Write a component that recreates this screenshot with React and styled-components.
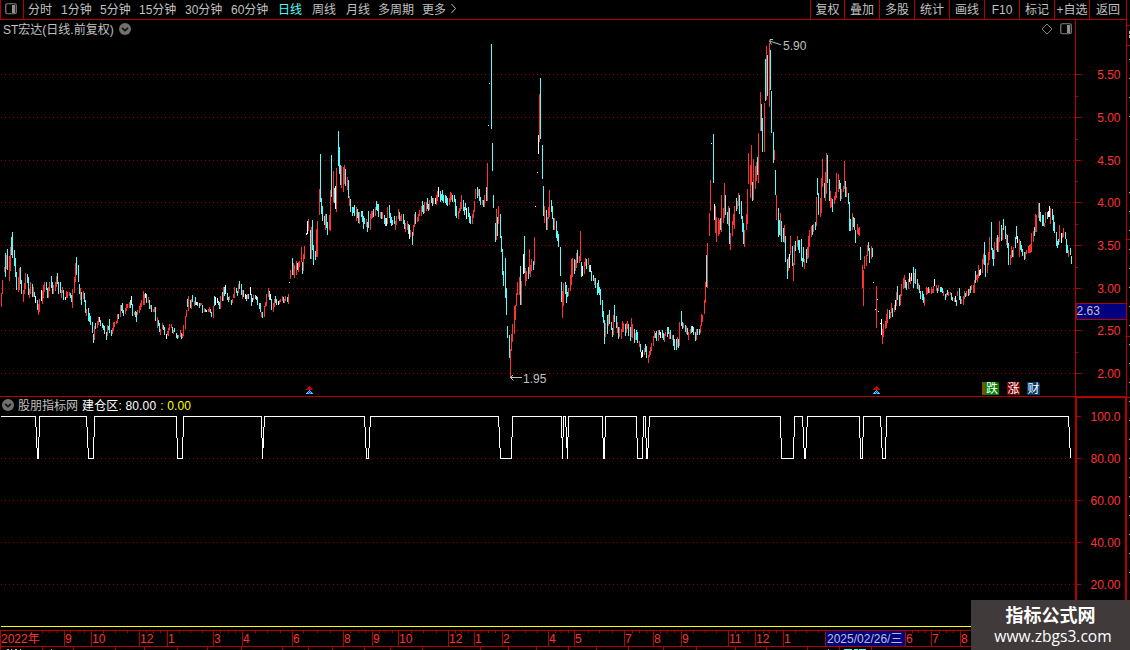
import React from 'react';

import styled, { createGlobalStyle } from 'styled-components';

const RED = '#b40000';
const UI_FONT = '"Liberation Sans", "Noto Sans CJK SC", sans-serif';

const GlobalStyle = createGlobalStyle`
  body {
    margin: 0;
    background: #000;
    overflow: hidden;
  }
`;

const Screen = styled.div`
  position: relative;
  display: grid;
  grid-template-columns: 1127px 3px;
  width: 1130px;
  height: 650px;
  overflow: hidden;
  background: #000;
  color: #c0c0c0;
  font-family: ${UI_FONT};
  font-size: 12px;
`;

const Main = styled.div`
  display: flex;
  flex-direction: column;
  height: 650px;
`;

const Toolbar = styled.div`
  display: flex;
  justify-content: space-between;
  box-sizing: border-box;
  height: 20px;
  border-bottom: 1px solid ${RED};
  border-left: 1px solid ${RED};
  border-right: 1px solid ${RED};
  line-height: 20px;
  white-space: nowrap;
`;

const ToolbarGroup = styled.div`
  display: flex;
  height: 19px;
`;

const LayoutToggle = styled.div`
  box-sizing: border-box;
  width: 23px;
  height: 19px;
  padding: 3px 0 0 4px;
  margin-right: 4px;
  border-right: 1px solid ${RED};
  line-height: 0;
`;

const Period = styled.span`
  width: ${(p) => p.$width}px;
  color: ${(p) => (p.$active ? '#54fcfc' : '#c0c0c0')};
`;

const Action = styled.span`
  box-sizing: border-box;
  width: ${(p) => p.$width}px;
  border-left: 1px solid ${RED};
  text-align: center;
`;

const Panel = styled.div`
  position: relative;
  height: ${(p) => p.$height}px;
`;

const PanelTitle = styled.div`
  position: absolute;
  top: ${(p) => p.$top}px;
  left: ${(p) => p.$left}px;
  display: flex;
  align-items: center;
  gap: ${(p) => p.$gap}px;
  height: 14px;
  line-height: 14px;
  white-space: nowrap;
`;

const TitleText = styled.span`
  padding-top: 2px;
  color: ${(p) => p.$color || '#c0c0c0'};
  letter-spacing: ${(p) => (p.$color ? 0.15 : 0)}px;
`;

const PanelTools = styled.div`
  position: absolute;
  top: 3px;
  right: 55px;
  display: flex;
  gap: 7px;
`;

const Tags = styled.div`
  position: absolute;
  top: 362px;
  left: 982px;
  display: flex;
  gap: 7px;
`;

const Tag = styled.span`
  box-sizing: border-box;
  width: ${(p) => (p.$edge ? 17 : 13)}px;
  height: 13px;
  margin-right: ${(p) => (p.$edge ? 1 : 0)}px;
  border-left: ${(p) => (p.$edge ? `3px solid ${p.$edge}` : 'none')};
  border-radius: 0 2px 0 0;
  background: ${(p) => p.$bg};
  color: #fff;
  line-height: 14px;
  text-align: center;
`;

const TimeAxis = styled.div`
  position: relative;
  display: flex;
  box-sizing: border-box;
  height: 17px;
  border-top: 1px solid ${RED};
  border-bottom: 1px solid ${RED};
  line-height: 17px;
`;

const TimeCell = styled.span`
  box-sizing: border-box;
  width: ${(p) => p.$width}px;
  height: 15px;
  padding-left: ${(p) => (p.$current ? 1 : 0)}px;
  border-left: 1px solid ${RED};
  background: ${(p) => (p.$current ? '#000080' : 'transparent')};
  color: ${(p) => (p.$current ? '#c0c0c0' : '#ff3232')};
  white-space: nowrap;
`;

const Overlay = styled.svg`
  position: absolute;
  top: -1px;
  left: 0;
`;

const Watermark = styled.div`
  position: absolute;
  right: 0;
  bottom: 0;
  display: flex;
  flex-direction: column;
  align-items: center;
  box-sizing: border-box;
  width: 159px;
  height: 50px;
  padding-top: 6px;
  background: #403a3a;
  color: #fff;
`;

const SiteName = styled.div`
  font: bold 18px/21px ${UI_FONT};
`;

const SiteUrl = styled.div`
  padding-left: 5px;
  font: 15.6px/18px 'Open Sans', sans-serif;
`;

const PERIODS = [
  ['分时', 33],
  ['1分钟', 39],
  ['5分钟', 39],
  ['15分钟', 46],
  ['30分钟', 46],
  ['60分钟', 47],
  ['日线', 34],
  ['周线', 34],
  ['月线', 32],
  ['多周期', 44],
  ['更多', 28],
];

const ACTIONS = [
  ['复权', 34],
  ['叠加', 35],
  ['多股', 35],
  ['统计', 35],
  ['画线', 35],
  ['F10', 35],
  ['标记', 35],
  ['+自选', 35],
  ['返回', 37],
];

// colour, x, top, bottom
const BARS = `
r1,293,307 r2,280,294 r4,267,272 c5,253,277 r6,255,269 c7,249,270 r9,256,281 r10,247,271 c11,237,255 c12,232,258
c14,250,266 c15,258,277 c16,272,290 r18,277,292 r19,268,290 c20,267,284 c21,280,294 r23,290,302 r24,283,294 r25,273,289
c27,274,283 c28,277,295 r29,289,298 r30,282,294 c32,284,297 r33,287,297 c34,292,297 w35,296,303 c37,300,310 r38,304,315
r39,299,312 w41,290,301 r42,291,304 r43,285,298 r44,282,292 c46,282,290 c47,288,298 r48,287,298 r49,282,291 c51,276,288
c52,282,294 r53,285,294 r55,282,291 r56,276,287 c57,273,284 c58,282,294 c60,282,293 r61,290,298 r62,287,293 c63,290,300
w65,297,300 r66,291,298 r67,292,298 r69,292,296 c70,293,298 c71,295,302 r72,289,308 r74,277,293 r75,263,282 c76,257,275
c78,265,282 c79,284,294 r80,288,300 c81,292,305 r83,291,299 c84,293,302 c85,300,313 r86,309,316 c88,308,321 c89,313,322
c90,316,325 c92,322,333 c93,334,343 r94,326,340 c95,323,329 r97,321,328 r98,317,325 w99,317,322 c100,320,326 c102,323,328
c103,325,330 c104,326,334 c106,332,340 r107,325,336 c108,326,330 c109,319,333 c111,330,336 r112,328,334 r113,322,331
r114,322,327 r116,321,324 r117,314,323 c118,314,319 r120,305,317 c121,305,311 c122,303,313 c123,310,316 r125,308,314
r126,304,311 r127,304,308 r129,302,308 c130,300,308 w131,296,305 c132,304,316 r134,312,315 c135,311,317 c136,312,322
r137,310,315 r139,306,313 r140,303,310 r141,300,307 r143,291,305 r144,294,305 w145,293,298 c146,294,303 r148,297,303
c149,300,309 r150,305,309 c151,305,312 r153,309,312 r154,307,312 c155,307,321 r157,317,328 c158,320,326 c159,323,332
r160,329,335 r162,323,329 c163,325,330 c164,327,335 w166,334,339 r167,331,335 r168,328,336 r169,324,330 r171,324,328
c172,327,333 r173,330,334 c174,328,332 c176,333,338 c177,335,339 r178,335,338 r180,330,337 c181,333,339 r182,334,338
r183,325,336 r185,316,329 r186,310,317 c187,299,307 r188,296,311 c190,300,308 r191,299,309 c192,295,302 r194,301,306
c195,297,305 w196,302,305 c197,302,306 c199,303,308 r200,303,306 r201,303,305 c202,305,313 r204,308,312 c205,309,312
w206,310,312 r208,309,312 r209,307,312 c210,309,313 c211,312,317 r213,306,318 c214,296,306 w215,297,305 w217,298,303
c218,301,305 c219,302,309 r220,296,309 c222,292,301 r223,287,301 c224,287,296 w225,285,294 c227,293,300 c228,297,302
r229,296,300 c231,300,305 r232,299,303 r233,294,298 r234,287,298 c236,288,293 c237,291,296 r238,284,293 c239,281,289
c241,284,295 r242,290,299 c243,290,297 w245,294,299 c246,295,301 r247,294,299 c248,294,299 w250,287,295 c251,294,306
w252,298,302 r253,295,300 c255,295,299 w256,296,300 c257,297,305 c259,303,309 c260,303,312 r261,312,317 c262,312,318
r264,306,317 r265,302,307 r266,294,306 r268,288,297 c269,291,300 w270,294,300 c271,299,310 r273,303,312 r274,299,307
c275,296,303 c276,299,305 w278,301,305 r279,300,304 r280,299,302 r282,296,301 c283,297,303 r284,299,303 r285,296,301
c287,297,302 r288,294,304 w289,282,283 r290,270,279 c292,258,275 r293,263,275 r294,265,278 r296,261,275 w297,263,270
r298,262,272 r299,261,267 r301,247,262 c302,262,274 r303,254,271 r304,246,259 w306,233,235 w307,221,234 r308,219,231
c310,230,259 r311,227,259 c312,220,250 c313,245,265 c315,251,260 r316,229,257 r317,221,257 r319,189,215 c320,154,202
c321,198,214 c322,206,221 c324,216,225 r325,214,230 c326,214,228 c327,222,235 r329,215,230 r330,190,231 c331,155,197
r333,171,202 c334,188,203 w335,186,209 r336,168,212 c338,131,166 c339,147,174 c340,165,185 r341,166,188 r343,167,192
r344,165,184 c345,169,186 r347,177,190 c348,180,198 r349,196,206 c350,199,212 c352,207,216 c353,207,213 c354,205,216
r356,207,221 c357,209,218 c358,212,223 r359,212,224 c361,211,217 c362,211,222 c363,216,229 c364,218,224 r366,219,227
c367,222,232 c368,211,228 r370,214,230 r371,211,219 r372,211,218 c373,209,217 r375,207,216 c376,201,210 c377,204,211
c378,204,217 r380,212,218 c381,212,219 r382,212,219 c384,215,224 c385,218,226 w386,218,226 r387,207,224 c389,205,218
c390,213,223 c391,217,226 c392,220,225 c394,216,224 r395,221,230 r396,216,225 r398,209,219 c399,212,221 r400,216,221
r401,214,221 c403,214,224 c404,220,229 r405,223,232 r407,221,230 c408,224,234 w409,225,239 r410,230,237 c412,232,245
r413,225,236 r414,214,227 c415,212,224 r417,217,222 r418,214,221 r419,210,216 r421,206,216 c422,201,212 c423,205,214
r424,202,213 r426,202,211 c427,198,209 c428,204,211 r429,200,210 c431,196,203 c432,198,206 r433,198,204 w435,198,204
r436,195,205 r437,191,201 w438,187,197 c440,191,202 c441,194,200 c442,190,201 c443,195,203 c445,195,203 c446,196,205
c447,198,206 r449,198,205 r450,192,202 r451,193,200 c452,195,202 c454,195,202 c455,199,216 c456,206,218 r458,211,219
r459,208,213 r460,202,211 r461,195,209 c463,200,211 c464,207,215 c465,203,210 w466,208,219 c468,207,217 c469,213,223
c470,216,224 r472,214,224 r473,210,218 r474,201,212 r475,189,199 c477,187,198 r478,189,196 c479,189,201 c480,197,205
r482,200,205 c483,200,207 r484,195,207 c486,187,201 r487,163,201 w488,125,126 w489,83,84 c491,44,129 c492,143,171
c493,195,208 c495,223,242 r496,209,240 c497,217,236 r498,206,224 c500,214,238 c501,236,252 c502,249,275 c503,271,286
c505,258,298 c506,288,315 c507,326,338 c509,335,358 r510,349,377 r511,334,351 r512,324,342 r514,306,334 r515,305,320
r516,293,306 r517,282,295 r519,277,295 c520,266,305 r521,281,305 w523,254,274 c524,236,273 r525,268,286 r526,271,281
c528,267,279 r529,249,274 r530,265,277 r531,259,271 c533,261,270 r534,237,265 w535,206,207 w537,172,173 w538,135,154
r539,94,142 c540,78,139 c542,145,179 c543,186,216 r544,206,223 c546,210,230 r547,217,230 r548,207,219 r549,190,217
c551,200,212 c552,206,219 c553,218,230 r554,218,230 c556,221,238 c557,231,241 c558,234,247 c560,247,276 c561,282,302
r562,291,318 r563,283,306 c565,282,294 c566,285,303 c567,292,297 r568,288,296 r570,275,291 r571,259,285 r572,258,277
c574,259,274 r575,260,271 r576,253,268 c577,250,263 r579,256,263 r580,231,261 c581,262,277 w582,266,276 r584,262,274
r585,258,266 c586,259,269 r588,258,265 c589,265,272 w590,265,272 c591,271,281 c593,275,281 r594,278,285 c595,278,288
c597,283,295 c598,280,293 c599,287,295 c600,289,305 c602,300,317 c603,311,323 c604,320,344 r605,323,337 c607,315,334
r608,314,326 c609,310,324 c611,322,330 c612,328,337 r613,315,335 c614,305,322 c616,316,328 r617,322,333 c618,327,339
r619,327,337 r621,329,339 r622,321,332 r623,323,332 c625,324,336 r626,323,333 r627,321,329 c628,324,336 c630,327,341
r631,318,337 r632,324,338 c634,329,343 r635,333,340 c636,330,340 c637,332,343 r639,341,347 c640,344,352 w641,352,358
w642,350,357 r644,348,355 c645,344,352 c646,346,358 r648,355,363 r649,351,357 r650,347,355 r651,343,351 r653,336,346
r654,331,338 c655,333,338 c656,331,341 r658,330,341 c659,330,335 w660,332,338 c662,330,338 c663,333,340 r664,334,342
r665,332,336 c667,327,337 c668,327,334 r669,332,339 c670,330,339 r672,335,340 c673,335,346 c674,339,350 c676,339,350
r677,337,347 c678,339,348 r679,322,346 c681,311,326 c682,322,329 r683,323,328 c685,325,332 r686,326,334 c687,328,335
r688,332,340 r690,329,334 c691,326,333 w692,326,332 c693,327,335 c695,332,341 r696,329,340 c697,329,335 c699,329,335
r700,325,333 r701,314,326 r702,315,322 r704,300,314 r705,282,303 c706,255,287 r707,243,288 r709,213,236 r710,180,211
w711,143,144 c713,134,183 w714,204,220 r715,206,233 r716,217,242 r718,218,236 r719,220,234 c720,218,230 r721,195,232
r723,208,223 r724,183,218 c725,195,215 c727,212,224 r728,206,226 c729,208,244 r730,233,250 r732,221,236 r733,214,225
r734,206,229 c736,198,211 r737,201,209 r738,193,206 c739,195,214 c741,201,219 c742,216,232 c743,223,244 r744,230,247
r746,214,230 r747,189,224 r748,153,184 r750,165,198 r751,145,185 c752,182,201 r753,159,200 r755,166,189 r756,162,181
c757,157,175 r758,133,183 r760,92,131 c761,104,131 c762,118,152 r764,103,152 c765,59,101 r766,46,100 c767,55,96
r769,43,107 c770,50,90 c771,91,133 c773,132,163 r774,150,160 c775,170,195 r776,195,220 c778,208,237 c779,220,235
r780,213,236 c781,221,242 c783,228,242 r784,225,243 c785,236,262 c787,259,279 r788,257,271 w789,254,268 r790,236,255
c792,246,266 r793,263,281 r794,245,265 c795,241,251 r797,236,247 c798,240,250 c799,240,253 c801,239,261 c802,258,267
c803,247,262 r804,259,269 c806,249,263 r807,247,259 r808,236,258 r809,230,247 r811,226,237 c812,225,235 r813,224,232
c815,222,230 r816,197,226 c817,178,195 c818,193,215 r820,198,217 r821,178,213 r822,159,187 c824,183,198 r825,172,201
r826,153,194 c827,155,183 c829,179,201 r830,191,208 r831,198,207 c832,199,212 r834,196,204 r835,192,200 r836,173,198
r838,174,192 c839,180,189 c840,183,201 r841,189,199 r843,186,192 r844,161,189 c845,181,197 r846,187,197 c848,193,204
c849,202,231 c850,219,231 r852,213,230 c853,217,227 c854,218,230 c855,230,243 r857,224,234 r858,228,235 r859,227,236
c860,247,260 r862,265,288 r863,270,306 r864,256,269 r866,255,266 r867,245,256 c868,242,251 c869,248,263 r871,246,259
c872,248,257 w873,282,283 w875,309,310 r876,286,328 w877,299,300 w878,311,312 w880,323,324 w881,319,335 r882,329,344
r883,324,337 r885,321,329 r886,314,328 r887,309,323 c889,310,319 r890,312,318 r891,303,313 c892,308,317 r894,305,312
w895,300,310 r896,292,306 c897,286,300 c899,295,306 r900,294,305 r901,284,296 r903,278,289 r904,275,288 c905,280,288
c906,282,290 r908,279,289 w909,273,282 r910,277,284 w911,273,281 c913,267,288 r914,273,283 c915,269,284 c917,279,289
r918,283,290 c919,285,293 c920,291,299 c922,291,300 c923,294,303 r924,297,306 r926,287,295 r927,288,294 c928,287,293
r929,289,293 r931,287,294 r932,289,293 r933,286,293 w934,279,286 r936,285,291 c937,288,293 r938,285,291 c940,287,292
c941,287,292 c942,288,293 r943,291,296 c945,294,300 r946,293,297 c947,290,295 r948,292,296 r950,292,295 c951,293,300
c952,297,301 r954,298,302 w955,296,302 c956,300,306 r957,291,296 c959,288,300 c960,296,304 r961,299,304 r963,296,305
r964,291,299 c965,293,297 r966,291,296 c968,289,296 r969,289,295 c970,286,293 r971,285,290 r973,285,293 r974,280,293
c975,271,283 r976,275,280 r977,274,282 r978,265,278 w979,270,276 w980,269,275 r982,259,273 r983,254,264 c984,242,265
c985,255,277 r987,263,273 r988,252,265 r989,237,260 c991,222,250 c992,248,259 c993,250,266 r994,242,259 r996,238,250
c997,235,252 r998,237,252 r999,221,242 c1001,225,241 r1002,228,240 c1003,219,230 c1005,226,239 r1006,234,245 c1007,235,248
c1008,243,265 r1010,255,265 r1011,246,258 c1012,250,257 r1013,247,257 c1015,237,248 c1016,226,239 w1017,236,243
r1019,239,257 c1020,241,250 c1021,245,252 c1022,249,256 c1024,252,260 r1025,252,259 r1026,250,254 r1028,246,253
r1029,245,253 r1030,244,253 r1031,233,252 r1033,231,242 c1034,227,236 r1035,214,232 r1036,215,232 r1038,203,218
c1039,203,221 c1040,212,222 c1042,215,226 c1043,215,226 r1044,223,227 r1045,212,223 c1047,212,219 w1048,211,217
w1049,206,217 r1050,208,224 c1052,209,220 c1053,215,231 c1054,222,233 c1056,232,246 c1057,241,248 c1058,239,245
r1059,225,242 w1061,233,243 r1062,233,238 r1063,228,237 c1065,232,239 c1066,239,253 c1067,245,253 r1068,250,257
c1070,248,255 c1071,256,264
`
  .trim()
  .split(/\s+/)
  .map((item) => {
    const [x, top, bottom] = item.slice(1).split(',').map(Number);
    return { kind: item[0], x, top, bottom };
  });

const BAR_COLORS = { r: '#ff3232', c: '#54fcfc', w: '#ffffff' };

const PRICE_LEVELS = [
  [74, '5.50'],
  [117, '5.00'],
  [160, '4.50'],
  [202, '4.00'],
  [245, '3.50'],
  [288, '3.00'],
  [330, '2.50'],
  [373, '2.00'],
];
const PRICE_MINOR = [96, 139, 181, 224, 267, 309, 352];

const SIGNAL_LEVELS = [
  [416, '100.0'],
  [458, '80.00'],
  [500, '60.00'],
  [542, '40.00'],
  [584, '20.00'],
];

// top-left, bottom-left, bottom-right, top-right of every dip
const DIPS = [
  [35, 37, 38, 39],
  [86, 88, 93, 94],
  [176, 177, 182, 183],
  [261, 262, 262, 264],
  [364, 366, 368, 370],
  [498, 500, 511, 512],
  [561, 562, 562, 563],
  [565, 567, 567, 568],
  [602, 603, 604, 605],
  [636, 637, 642, 643],
  [645, 646, 647, 649],
  [780, 781, 793, 794],
  [802, 804, 805, 807],
  [859, 860, 862, 863],
  [880, 882, 885, 886],
];

const MONTHS = [
  ['2022年', 0],
  ['9', 64],
  ['10', 91],
  ['12', 139],
  ['1', 167],
  ['3', 213],
  ['4', 242],
  ['6', 292],
  ['8', 343],
  ['9', 372],
  ['10', 398],
  ['12', 448],
  ['1', 474],
  ['2', 502],
  ['4', 548],
  ['5', 574],
  ['7', 624],
  ['8', 653],
  ['9', 681],
  ['11', 728],
  ['12', 755],
  ['1', 783],
  ['2025/02/26/三', 825],
  ['6', 905],
  ['7', 931],
  ['8', 960],
];

const TIME_TICKS = [
  42, 49, 57, 70, 78, 84, 103, 115, 127, 146, 153, 160, 179, 190, 202, 220, 228, 235, 255, 267, 280, 303, 317, 330, 350,
  358, 365, 379, 385, 392, 411, 423, 436, 455, 461, 468, 481, 488, 495, 513, 525, 537, 555, 561, 568, 588, 599, 612, 632,
  639, 646, 660, 667, 674, 693, 705, 716, 735, 742, 748, 763, 769, 776, 795, 806, 818, 912, 918, 925, 939, 946, 953,
];
const FOOT_TICKS = [
  0, 42, 73, 115, 144, 177, 207, 241, 282, 308, 332, 364, 390, 422, 480, 508, 536, 568, 596, 628, 663, 696, 735, 766, 807,
  839, 871,
];

const barPath = (kind) =>
  BARS.filter((_) => _.kind === kind)
    .map(({ x, top, bottom }) => `M${x + 0.5} ${top}V${bottom}`)
    .join('');

const signalPath = () =>
  `M1 416.5${DIPS.map(([a, b, c, d]) => `H${a + 0.5}L${b + 0.5} 458.5H${c + 0.5}L${d + 0.5} 416.5`).join('')}H1068.5L1070.5 458.5`;

const PanelIcon = () => (
  <svg width='12' height='12' viewBox='0 0 12 12'>
    <rect x='0.75' y='0.75' width='10.5' height='10' rx='1.5' fill='none' stroke='#808080' strokeWidth='1.2' />
    <rect x='7' y='2' width='3' height='8' fill='#909090' />
  </svg>
);

const DropIcon = () => (
  <svg width='12' height='12' viewBox='0 0 12 12'>
    <circle cx='6' cy='6' r='6' fill='#707070' />
    <path d='M3 4.8L6 7.6L9 4.8' fill='none' stroke='#101010' strokeWidth='1.6' />
  </svg>
);

const DiamondIcon = () => (
  <svg width='12' height='12' viewBox='0 0 12 12'>
    <path d='M6 1L11 6L6 11L1 6Z' fill='none' stroke='#909090' strokeWidth='0.9' />
  </svg>
);

const SignalMark = ({ x }) => (
  <g transform={`translate(${x} 386)`} fill='none' shapeRendering='crispEdges'>
    <path d='M3 0.5h1M2 1.5h3M1 2.5h5M0 3.5h7' stroke='#d00000' />
    <path d='M3 4.5h1M2 5.5h3M1 6.5h5M0 7.5h7' stroke='#30d8ff' />
    <path d='M3 5.5h1M2 6.5h1M4 6.5h1M3 7.5h1' stroke='#0030ff' />
  </g>
);

const AxisLabel = ({ y, children }) => (
  <text x='1120.5' y={y + 4.8} textAnchor='end' fill='#ff3232' fontSize='12'>
    {children}
  </text>
);

const PriceChart = () => (
  <svg width='1127' height='376' viewBox='0 20 1127 376' fontFamily={UI_FONT}>
    <g stroke='#a00000' shapeRendering='crispEdges'>
      {PRICE_LEVELS.map(([y]) => (
        <path key={y} d={`M1 ${y + 0.5}H1074`} strokeDasharray='1 3' />
      ))}
    </g>
    <g stroke={RED} shapeRendering='crispEdges'>
      <path d='M1075.5 20V396M1126.5 20V396' />
      {PRICE_LEVELS.map(([y]) => (
        <path key={y} d={`M1076 ${y + 0.5}h5`} />
      ))}
      {PRICE_MINOR.map((y) => (
        <path key={y} d={`M1076 ${y + 0.5}h2`} />
      ))}
    </g>
    {Object.keys(BAR_COLORS).map((kind) => (
      <path key={kind} d={barPath(kind)} stroke={BAR_COLORS[kind]} fill='none' shapeRendering='crispEdges' />
    ))}
    {PRICE_LEVELS.map(([y, label]) => (
      <AxisLabel key={y} y={y}>
        {label}
      </AxisLabel>
    ))}
    <rect x='1076' y='303.5' width='50' height='16' fill='#000080' stroke={RED} shapeRendering='crispEdges' />
    <g fill='#c0c0c0' fontSize='12'>
      <text x='1076.5' y='315.3'>
        2.63
      </text>
      <text x='783' y='50'>
        5.90
      </text>
      <text x='523' y='383'>
        1.95
      </text>
    </g>
    <g stroke='#c0c0c0' fill='none'>
      <path d='M769.5 41L781 44.8M773 39.5H770V42L771.5 44.5' />
      <path d='M510 377.5H522M513 375L510.5 377.5L513.5 380.5' />
    </g>
    <SignalMark x={306} />
    <SignalMark x={873} />
  </svg>
);

const SignalChart = () => (
  <svg width='1127' height='234' viewBox='0 396 1127 234' fontFamily={UI_FONT}>
    <g stroke='#a00000' shapeRendering='crispEdges'>
      {SIGNAL_LEVELS.slice(1).map(([y]) => (
        <path key={y} d={`M1 ${y + 0.5}H1074`} strokeDasharray='1 3' />
      ))}
    </g>
    <g stroke={RED} fill='none' shapeRendering='crispEdges'>
      <path d='M0 396.5H1075' />
      <path d='M1076 630V397H1126V630' strokeWidth='2' />
      {SIGNAL_LEVELS.map(([y]) => (
        <path key={y} d={`M1077 ${y + 0.5}h4`} />
      ))}
    </g>
    <path d={signalPath()} stroke='#fff' fill='none' shapeRendering='crispEdges' />
    <path d='M1 626.5H1075' stroke='#ffff00' shapeRendering='crispEdges' />
    {SIGNAL_LEVELS.map(([y, label]) => (
      <AxisLabel key={y} y={y}>
        {label}
      </AxisLabel>
    ))}
  </svg>
);

// sliver of the neighbouring quote list
const EdgeStrip = () => (
  <svg width='3' height='650' viewBox='0 0 3 650' shapeRendering='crispEdges'>
    <path d='M0 25.5H3M0 45.5H3M0 239.5H3M0 336.5H3M0 397.5H3' stroke={RED} />
    <path d='M2.5 31V34M2.5 35V38M2.5 59V60M2.5 78V79M2.5 97V98M2.5 116V117' stroke='#c0c0c0' />
    <path d='M2.5 192V590' stroke='#c0c0c0' strokeDasharray='1 18' />
  </svg>
);

const App = () => {
  return (
    <>
      <GlobalStyle />
      <Screen>
        <Main>
          <Toolbar>
            <ToolbarGroup>
              <LayoutToggle>
                <PanelIcon />
              </LayoutToggle>
              {PERIODS.map(([label, width]) => (
                <Period key={label} $width={width} $active={label === '日线'}>
                  {label}
                </Period>
              ))}
              <svg width='8' height='18' viewBox='0 0 8 18'>
                <path d='M1.5 4L5.5 8.5L1.5 13' fill='none' stroke='#c0c0c0' />
              </svg>
            </ToolbarGroup>
            <ToolbarGroup>
              {ACTIONS.map(([label, width]) => (
                <Action key={label} $width={width}>
                  {label}
                </Action>
              ))}
            </ToolbarGroup>
          </Toolbar>
          <Panel $height={376}>
            <PriceChart />
            <PanelTitle $top={2} $left={3} $gap={5}>
              <TitleText>ST宏达(日线.前复权)</TitleText>
              <DropIcon />
            </PanelTitle>
            <PanelTools>
              <DiamondIcon />
              <PanelIcon />
            </PanelTools>
            <Tags>
              <Tag $bg='#008000' $edge='#8a4a00'>
                跌
              </Tag>
              <Tag $bg='#800000'>涨</Tag>
              <Tag $bg='#003c70'>财</Tag>
            </Tags>
          </Panel>
          <Panel $height={234}>
            <SignalChart />
            <PanelTitle $top={2} $left={2} $gap={4}>
              <DropIcon />
              <TitleText>股朋指标网</TitleText>
              <TitleText $color='#ffffff'>建仓区: 80.00</TitleText>
              <TitleText $color='#ffff00'>: 0.00</TitleText>
            </PanelTitle>
          </Panel>
          <TimeAxis>
            {MONTHS.map(([label, x], idx) => (
              <TimeCell key={x} $width={(MONTHS[idx + 1]?.[1] ?? 1075) - x} $current={label.includes('/')}>
                {label}
              </TimeCell>
            ))}
            <Overlay width='1127' height='20' viewBox='0 0 1127 20' shapeRendering='crispEdges'>
              <path d={TIME_TICKS.map((x) => `M${x + 0.5} 1v2`).join('')} stroke={RED} />
              <path d={FOOT_TICKS.map((x) => `M${x + 0.5} 17v3`).join('')} stroke={RED} />
              <path d='M7 19.5h2M11 19.5h1M15 19.5h2M20 19.5h1M51 19.5h1M828 19.5h1' stroke='#c0c0c0' />
              <path d='M844 19.5h8M854 19.5h4M859 19.5h7' stroke='#54fcfc' />
            </Overlay>
          </TimeAxis>
        </Main>
        <EdgeStrip />
        <Watermark>
          <SiteName>指标公式网</SiteName>
          <SiteUrl>www.zbgs3.com</SiteUrl>
        </Watermark>
      </Screen>
    </>
  );
};

export default App;
